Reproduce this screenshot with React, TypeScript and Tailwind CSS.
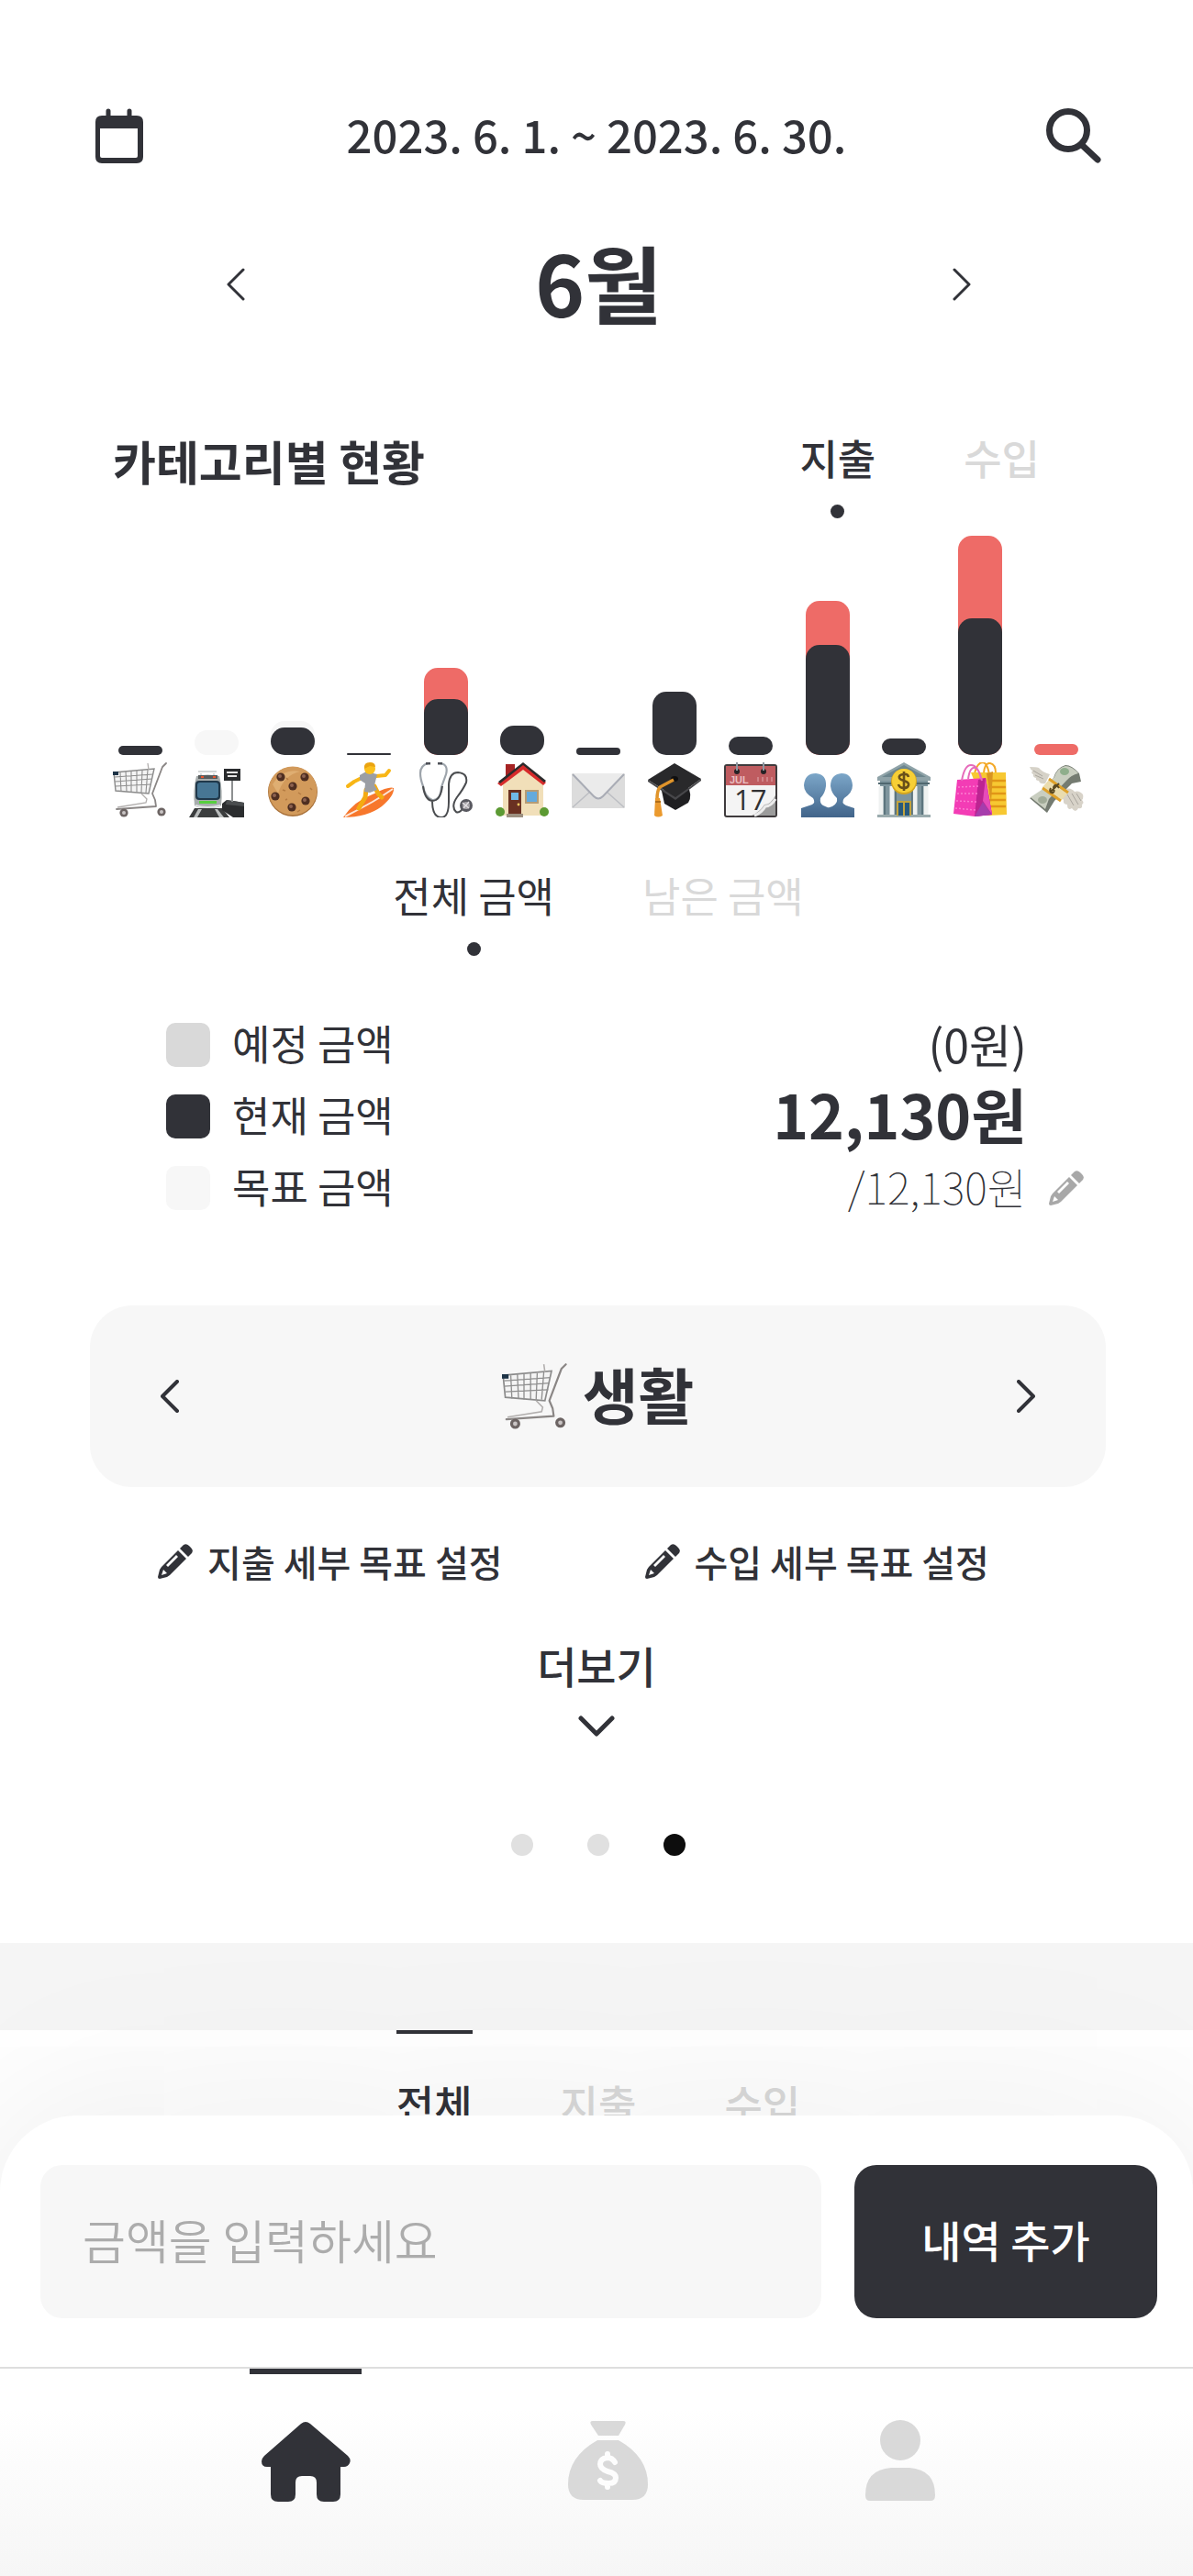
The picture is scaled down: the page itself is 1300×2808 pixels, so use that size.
import React from "react";

const INK = "#313238";

function Cart() {
  return (
    <svg viewBox="0 0 60 60" className="block h-full w-full" fill="none" aria-hidden="true">
      <path d="M1 11 45 7 39 34 3 31Z" fill="#f4f4f4" stroke="#8b8b8b" strokeWidth="1.4" />
      <path d="M2 16 44 13M2 21 43 18M3 26 42 24M8 11 9 32M14 10 15 32M20 10 20 33M26 9 26 33M32 9 31 33M38 8 36 33" stroke="#8f8f8f" strokeWidth="1.1" />
      <path d="M58 1 54 5 43 34 46 41 47 48 4 51" stroke="#8a8685" strokeWidth="1.8" strokeLinecap="round" strokeLinejoin="round" />
      <path d="M31 34 37 40 36 44 5 49M38 1 39 8" stroke="#b1aead" strokeWidth="1.3" />
      <rect x="0" y="10" width="6" height="4" fill="#1d3346" />
      <circle cx="12" cy="55" r="4.6" fill="#6c6463" />
      <circle cx="12" cy="55" r="2" fill="#c9c4c4" />
      <circle cx="53" cy="54" r="4.6" fill="#6c6463" />
      <circle cx="53" cy="54" r="2" fill="#c9c4c4" />
    </svg>
  );
}

function Station() {
  return (
    <svg viewBox="0 0 60 60" className="block h-full w-full" aria-hidden="true">
      <path d="M6 50H36L44 60H0Z" fill="#3b3d3e" />
      <path d="M10 51 5 60H9L14 51ZM28 51 33 60H38L31 51Z" fill="#b9bcbc" />
      <path d="M36 45 41 41 60 44V60H48L36 52Z" fill="#2b2d2f" />
      <path d="M41 41 60 44V48L40 46Z" fill="#4a4d4f" />
      <path d="M10 10H30M13 12V15M27 12V15" stroke="#c4c7c7" strokeWidth="1.4" />
      <path d="M8 15Q20 12 33 15Q37 30 35 47Q33 50 20 50Q8 50 6 47Q4 30 8 15Z" fill="#a7adad" />
      <path d="M10 14H31V18H10Z" fill="#565b5c" />
      <path d="M13 16H16M26 16H29" stroke="#e8542c" strokeWidth="2" />
      <rect x="7" y="20" width="27" height="21" rx="4" fill="#20384a" />
      <rect x="9" y="22" width="23" height="17" rx="3" fill="#477694" />
      <rect x="11" y="42" width="19" height="3" fill="#56cf3e" />
      <path d="M7 47Q20 51 34 47" stroke="#e2e5e5" strokeWidth="2" fill="none" />
      <rect x="46" y="19" width="2" height="24" fill="#8d9091" />
      <rect x="38" y="7" width="18" height="13" fill="#2a2c2e" />
      <path d="M41 11H53M42 15H52" stroke="#e6e6e6" strokeWidth="2" />
    </svg>
  );
}

function Cookie() {
  return (
    <svg viewBox="0 0 60 60" className="block h-full w-full" aria-hidden="true">
      <circle cx="30" cy="32" r="27" fill="#a8713a" />
      <circle cx="30" cy="31" r="26.4" fill="#d29a5b" />
      <path d="M8 24Q20 6 38 10Q20 14 14 34Z" fill="#dfae72" />
      {[
        [17, 16],
        [43, 16],
        [30, 26],
        [11, 37],
        [44, 42],
        [29, 49],
      ].map(([cx, cy]) => (
        <g key={`${cx}-${cy}`}>
          <circle cx={cx} cy={cy} r="4.6" fill="#4e2e21" />
          <circle cx={cx - 1} cy={cy - 1} r="2" fill="#8c6150" />
        </g>
      ))}
      <path d="M23 17 25 19M36 33 39 35M19 30 22 31M22 41 24 40M35 54 38 52M49 28 51 30" stroke="#b57c43" strokeWidth="1.5" />
    </svg>
  );
}

function Surfer() {
  return (
    <svg viewBox="0 0 60 60" className="block h-full w-full" fill="none" aria-hidden="true">
      <path d="M2 60Q14 42 36 34Q52 26 57 28Q58 36 44 48Q28 60 2 60Z" fill="#f7772c" />
      <path d="M4 59Q18 52 34 43Q46 36 56 29" stroke="#fbe7da" strokeWidth="2" />
      <path d="M22 17 14 21 7 26M38 15 48 14 52 9" stroke="#f8b616" strokeWidth="4" strokeLinecap="round" strokeLinejoin="round" />
      <path d="M27 30 26 38 19 50M36 26 40 34 44 38" stroke="#f4ab12" strokeWidth="5" strokeLinecap="round" strokeLinejoin="round" />
      <path d="M20 14 27 10 39 13 36 25 39 30 31 33 25 32 26 23 20 19Z" fill="#9b9ea4" />
      <circle cx="31" cy="7" r="6" fill="#fbc01d" />
      <path d="M25 7Q24 0 31 0Q37 0 37 5L31 4Z" fill="#eaa410" />
    </svg>
  );
}

function Stethoscope() {
  return (
    <svg viewBox="0 0 60 60" className="block h-full w-full" fill="none" aria-hidden="true">
      <path d="M11 1Q2 3 2 12Q2 18 5 26Q7 38 15 41Q24 42 25 27L30 13Q33 2 23 1" stroke="#9da4ab" strokeWidth="2.2" />
      <path d="M5 26Q7 41 15 42Q24 42 26 26M15 42Q15 60 25 60Q33 60 33 43V24Q34 11 43 11Q54 12 52 22Q49 29 42 38Q35 48 41 54Q45 56 49 49" stroke="#4a4c4f" strokeWidth="2" />
      <path d="M8 1H13M21 1H26" stroke="#4d5057" strokeWidth="3" />
      <circle cx="52" cy="47" r="7" fill="#595960" />
      <circle cx="52" cy="47" r="4" fill="#a5a2a6" />
      <path d="M48 44 55 50M49 50 55 43" stroke="#e3e0e4" strokeWidth="1.4" />
    </svg>
  );
}

function House() {
  return (
    <svg viewBox="0 0 60 60" className="block h-full w-full" aria-hidden="true">
      <path d="M12 2H22V14L12 24Z" fill="#a62323" />
      <path d="M9 24 31 5 53 24V58H9Z" fill="#f1dfb9" />
      <path d="M3 23 31 1 56 22 53 25 31 8 7 26Z" fill="#d72b2b" />
      <path d="M4 21 31 0 56 20 54 22 31 3 6 23Z" fill="#2c2b2c" />
      <rect x="15" y="30" width="14" height="28" fill="#6a3122" />
      <rect x="18" y="33" width="8" height="8" fill="#6fb9e7" />
      <circle cx="26" cy="46" r="1.4" fill="#f4cc61" />
      <rect x="33" y="30" width="15" height="15" fill="#b79c75" />
      <rect x="35" y="32" width="11" height="11" fill="#64aadd" />
      <rect x="13" y="56" width="18" height="4" fill="#9d9080" />
      <circle cx="6" cy="54" r="5" fill="#5c9a33" />
      <circle cx="54" cy="54" r="5" fill="#5c9a33" />
    </svg>
  );
}

function Mail() {
  return (
    <svg viewBox="0 0 60 60" className="block h-full w-full" fill="none" aria-hidden="true">
      <rect x="1" y="12" width="58" height="38" rx="1" fill="#dcdcdc" />
      <path d="M1 12H59L34 38Q30 42 26 38Z" fill="#ebebeb" />
      <path d="M2 49 21 32M58 49 39 32" stroke="#bcbec3" strokeWidth="1.5" />
      <path d="M2 13 25 37Q30 42 35 37L58 13" stroke="#a9acb5" strokeWidth="2" />
    </svg>
  );
}

function GradCap() {
  return (
    <svg viewBox="0 0 60 60" className="block h-full w-full" fill="none" aria-hidden="true">
      <path d="M16 31 44 25Q50 36 45 44L31 52 19 45Z" fill="#1f1f21" />
      <path d="M1 19 30 1 59 18 31 38Z" fill="#29292b" />
      <path d="M1 19 31 38 59 18V20L31 41 1 21Z" fill="#47474a" />
      <ellipse cx="30" cy="18" rx="4" ry="3" fill="#0f0f10" />
      <path d="M29 19 14 27Q11 31 11 40" stroke="#e0942a" strokeWidth="3.5" />
      <path d="M9 39H14L17 58Q12 61 8 58Z" fill="#eb9a2e" />
      <path d="M9 43H15" stroke="#b06d18" strokeWidth="2" />
    </svg>
  );
}

function DateSheet() {
  return (
    <svg viewBox="0 0 60 60" className="block h-full w-full overflow-visible" aria-hidden="true">
      <rect x="2" y="3" width="56" height="56" rx="2" fill="#f4f4f4" stroke="#3f3b3d" strokeWidth="2" />
      <path d="M3 4H57V25H3Z" fill="#bf5c60" />
      <path d="M38 16V21M43 16V21M48 16V21M53 16V21" stroke="#d08387" strokeWidth="2" />
      <path d="M57 36Q52 46 45 46Q40 54 31 58H57Z" fill="#9c9c9c" />
      <path d="M57 40Q52 48 46 48Q42 55 34 58" stroke="#ececec" strokeWidth="3" fill="none" />
      <text x="7" y="23" fontFamily="Liberation Sans" fontSize="11" fontWeight="700" fill="#eabfc1">JUL</text>
      <text x="12" y="52" fontFamily="Open Sans" fontSize="31" fill="#303032">17</text>
      <circle cx="15" cy="10" r="3" fill="#262225" />
      <circle cx="44" cy="10" r="3" fill="#262225" />
      <path d="M15 9V0M44 9V0" stroke="#8e97a1" strokeWidth="2" />
    </svg>
  );
}

function People() {
  return (
    <svg viewBox="0 0 60 60" className="block h-full w-full" aria-hidden="true">
      <defs>
        <linearGradient id="people" x1="0" y1="10" x2="0" y2="60" gradientUnits="userSpaceOnUse">
          <stop stopColor="#7ea9cb" />
          <stop offset="1" stopColor="#41648a" />
        </linearGradient>
      </defs>
      <path d="M1 60V50L13 46Q17 44 14 39Q4 33 4 25Q5 12 17 12Q29 13 28 26Q27 34 22 39Q21 45 25 47L34 51V60Z" fill="url(#people)" />
      <path d="M59 60V50L50 47Q44 44 48 39Q57 33 57 25Q56 12 45 12Q33 13 33 26Q34 34 40 39Q41 45 35 48L26 51V60Z" fill="url(#people)" />
    </svg>
  );
}

function Bank() {
  return (
    <svg viewBox="0 0 60 60" className="block h-full w-full" aria-hidden="true">
      <rect x="4" y="18" width="52" height="39" fill="#7e959d" />
      <path d="M1 16 30 0 59 16V20H1Z" fill="#8fa3a8" />
      <path d="M6 16 30 3 54 16Z" fill="#6c858d" />
      <path d="M2 23H58" stroke="#4f676f" strokeWidth="2" />
      <path d="M5 26V57M17 26V57M42 26V57M54 26V57" stroke="#eff2f1" strokeWidth="5" />
      <path d="M9 26V57M21 26V57M39 26V57M50 26V57" stroke="#526b74" strokeWidth="1.5" />
      <path d="M1 57H59V60H1Z" fill="#9aabad" />
      <rect x="22" y="42" width="16" height="16" fill="#c3a33c" />
      <path d="M24 44H29V58H24ZM31 44H36V58H31Z" fill="#28597d" />
      <circle cx="30" cy="21" r="14" fill="#d5a61e" />
      <circle cx="30" cy="20" r="13" fill="#f6cf36" />
      <path d="M35 16Q34 12 29 13Q24 14 25 17Q26 19 30 20Q36 22 35 25Q34 28 30 28Q25 28 24 24M30 10V31" fill="none" stroke="#695019" strokeWidth="2.6" />
    </svg>
  );
}

function Bags() {
  return (
    <svg viewBox="0 0 60 60" className="block h-full w-full" fill="none" aria-hidden="true">
      <path d="M24 12Q27 0 33 0Q38 1 40 13M34 12Q35 0 41 1Q47 2 47 12" stroke="#f3a928" strokeWidth="2" />
      <path d="M20 11H58L59 57 38 58Z" fill="#f7c832" />
      <path d="M39 20H58M39 27H58M40 34H58M40 41H58M40 48H58" stroke="#e19616" strokeWidth="2.5" />
      <path d="M37 12 44 10 42 44Z" fill="#d99420" />
      <path d="M5 19 36 17 43 57 24 59 1 56Z" fill="#f33cb5" />
      <path d="M36 17 28 19 24 59 43 57Z" fill="#bd2492" />
      <path d="M36 17 33 42 43 57Z" fill="#e74bb9" />
      <path d="M33 43 24 59 43 57Z" fill="#a63dac" />
      <path d="M6 27 28 26M5 34 27 34M4 42 26 43M3 50 25 52" stroke="#fb7cd0" strokeWidth="1.5" strokeDasharray="2 2" />
      <path d="M10 20Q13 3 20 3Q28 3 32 20M17 18Q19 4 25 6Q29 8 31 18" stroke="#e66bbb" strokeWidth="2" />
    </svg>
  );
}

function FlyingMoney() {
  return (
    <svg viewBox="0 0 60 60" className="block h-full w-full" fill="none" aria-hidden="true">
      <path d="M23 13Q15 11 11 6Q8 5 1 5Q2 8 4 9Q2 12 5 13Q4 16 8 17Q7 20 11 20Q12 24 18 23Z" fill="#d6d2c8" />
      <path d="M40 29Q46 27 50 32Q55 30 59 35Q60 39 58 41Q61 44 58 46Q59 51 54 50Q51 56 47 50Q42 53 42 46Q37 46 38 41Q35 38 36 33Z" fill="#d8d3c9" />
      <path d="M5 9 15 15M7 14 16 18M42 35 49 47M47 34 54 46M52 34 57 42" stroke="#aaa69e" strokeWidth="1" />
      <path d="M27 17Q30 6 40 3Q47 3 55 12L57 21 47 23Q36 34 28 42L20 55 1 39 13 33Z" fill="#747b71" />
      <path d="M28 16Q31 6 40 4Q47 4 54 12 46 14 41 20L22 40 18 51 2 38 14 30Z" fill="#c9cec0" />
      <ellipse cx="39" cy="10" rx="5" ry="4" fill="#8fae8c" />
      <ellipse cx="15" cy="41" rx="5" ry="4" fill="#a1ab98" />
      <path d="M22 19 42 34 36 41 15 27Z" fill="#eadcae" />
      <path d="M22 18 43 33M15 28 35 42" stroke="#dfa12a" strokeWidth="3" />
      <path d="M33 28Q29 22 27 27Q29 34 25 33Q22 32 24 28M23 33 33 23" stroke="#5c4a22" strokeWidth="2" />
    </svg>
  );
}

function Pencil({ className }: { className: string }) {
  return (
    <svg viewBox="0 0 38 38" className={className} fill="currentColor" aria-hidden="true">
      <path d="M24 5 28 1Q31-1 34 2L36 4Q39 7 37 10L33 14Z" />
      <path fillRule="evenodd" d="M22 7 31 16 13 34 10 36 2 38Q0 38 0 36L2 28 4 25ZM20 12 9 23 11 25 22 14ZM6 28 4 34 10 32Z" />
    </svg>
  );
}

function Chevron({ d, box, className, width }: { d: string; box: string; className: string; width: number }) {
  return (
    <svg viewBox={box} className={className} fill="none" stroke={INK} strokeWidth={width} strokeLinecap="round" strokeLinejoin="round" aria-hidden="true">
      <path d={d} />
    </svg>
  );
}

const LEFT = "M18 2 2 18 18 34";
const RIGHT = "M2 2 18 18 2 34";

type Category = { name: string; icon: () => React.ReactElement; goal?: number; over?: number; spent?: number };

const categories: Category[] = [
  { name: "생활", icon: Cart, spent: 10 },
  { name: "교통", icon: Station, goal: 27 },
  { name: "간식", icon: Cookie, goal: 37, spent: 30 },
  { name: "취미", icon: Surfer, spent: 2 },
  { name: "의료", icon: Stethoscope, over: 95, spent: 61 },
  { name: "주거", icon: House, spent: 32 },
  { name: "우편", icon: Mail, spent: 8 },
  { name: "교육", icon: GradCap, spent: 69 },
  { name: "일정", icon: DateSheet, spent: 20 },
  { name: "모임", icon: People, over: 168, spent: 120 },
  { name: "금융", icon: Bank, spent: 18 },
  { name: "쇼핑", icon: Bags, over: 239, spent: 149 },
  { name: "기타", icon: FlyingMoney, over: 12 },
];

function Bar({ height, color }: { height?: number; color: string }) {
  if (!height) return null;
  return <div className={`absolute inset-x-0 bottom-0 rounded-[15px] ${color}`} style={{ height }} />;
}

function DotTab({ label, active, className }: { label: string; active?: boolean; className: string }) {
  return (
    <button type="button" className={`flex flex-col items-center gap-[22px] text-[45px] leading-[58px] ${active ? "" : "text-[#d9d9d9]"} ${className}`}>
      {label}
      <span className={`size-[15px] rounded-full ${active ? "bg-[#313238]" : ""}`} />
    </button>
  );
}

function Amount({ swatch, label, children }: { swatch: string; label: string; children: React.ReactNode }) {
  return (
    <div className="flex h-[78px] items-center">
      <span className={`size-12 rounded-[10px] ${swatch}`} />
      <dt className="ml-6 pb-1 text-[45px]">{label}</dt>
      <dd className="ml-auto flex items-center">{children}</dd>
    </div>
  );
}

export default function App() {
  return (
    <div className="min-h-screen bg-white pb-[479px] text-[#313238] [font-family:'Noto_Sans_CJK_KR',sans-serif]">
      <header className="pt-[104px]">
        <div className="flex h-[88px] items-center justify-between px-[100px]">
          <button type="button" aria-label="달력">
            <svg viewBox="0 0 60 60" className="block size-[60px]" aria-hidden="true">
              <path fillRule="evenodd" fill={INK} d="M10 8H49Q56 8 56 15V53Q56 60 49 60H11Q4 60 4 53V15Q4 8 11 8ZM9 22V52Q9 54 11 54H48Q50 54 50 52V22Z" />
              <path d="M18 3V10M41 3V10" stroke={INK} strokeWidth="5" strokeLinecap="round" />
            </svg>
          </button>
          <p className="pb-1 text-[49px] font-medium">2023. 6. 1. ~ 2023. 6. 30.</p>
          <button type="button" aria-label="검색">
            <svg viewBox="0 0 60 60" className="block size-[60px]" fill="none" stroke={INK} strokeLinecap="round" aria-hidden="true">
              <circle cx="24" cy="24" r="20.5" strokeWidth="7" />
              <path d="M40 41 56 56" strokeWidth="7" />
            </svg>
          </button>
        </div>
        <div className="mt-[58px] flex h-[120px] items-center justify-between pr-[242px] pl-[247px]">
          <button type="button" aria-label="이전 달">
            <Chevron d={LEFT} box="0 0 20 36" className="block h-9 w-5" width={3} />
          </button>
          <h1 className="pb-2 text-[92px] leading-[112px] font-bold">6월</h1>
          <button type="button" aria-label="다음 달">
            <Chevron d={RIGHT} box="0 0 20 36" className="block h-9 w-5" width={3} />
          </button>
        </div>
      </header>

      <main>
        <section className="mt-[100px] pr-[107px] pl-[111px]">
          <div className="flex items-start">
            <h2 className="ml-3 text-[51px] leading-[64px] font-bold">카테고리별 현황</h2>
            <div className="mr-[60px] ml-auto flex gap-24">
              <DotTab label="지출" active className="font-medium" />
              <DotTab label="수입" className="font-medium" />
            </div>
          </div>
          <ul className="mt-[19px] grid grid-cols-[repeat(13,minmax(0,1fr))]">
            {categories.map(({ name, icon: Icon, goal, over, spent }) => (
              <li key={name} className="flex flex-col items-center gap-2" title={name}>
                <div className="relative h-[239px] w-12">
                  <Bar height={goal} color="bg-[#f7f7f7]" />
                  <Bar height={over} color="bg-[#ee6b67]" />
                  <Bar height={spent} color="bg-[#313238]" />
                </div>
                <div className="size-[60px]">
                  <Icon />
                </div>
              </li>
            ))}
          </ul>
          <div className="mt-14 flex justify-center gap-24">
            <DotTab label="전체 금액" active className="" />
            <DotTab label="남은 금액" className="" />
          </div>
        </section>

        <dl className="mx-[181px] mt-[58px]">
          <Amount swatch="bg-[#d9d9d9]" label="예정 금액">
            <span className="pb-1 text-[50px]">(0원)</span>
          </Amount>
          <Amount swatch="bg-[#313238]" label="현재 금액">
            <span className="pb-2 text-[66px] leading-[70px] font-bold">12,130원</span>
          </Amount>
          <Amount swatch="bg-[#f7f7f7]" label="목표 금액">
            <span className="pb-1 text-[47px] font-thin">/12,130원</span>
            <button type="button" aria-label="목표 금액 수정" className="-mr-[62px] ml-6 text-[#a8a8a8]">
              <Pencil className="block size-[38px]" />
            </button>
          </Amount>
        </dl>

        <div className="mt-[89px] mr-[95px] ml-[98px] flex h-[198px] items-center justify-between rounded-[46px] bg-[#f7f7f7] px-[77px]">
          <button type="button" aria-label="이전 카테고리">
            <Chevron d={LEFT} box="0 0 20 36" className="block h-9 w-5" width={4} />
          </button>
          <div className="flex items-center gap-4">
            <div className="size-[72px]">
              <Cart />
            </div>
            <h2 className="pb-2 text-[66px] leading-[90px] font-bold">생활</h2>
          </div>
          <button type="button" aria-label="다음 카테고리">
            <Chevron d={RIGHT} box="0 0 20 36" className="block h-9 w-5" width={4} />
          </button>
        </div>

        <div className="mt-[51px] flex justify-center gap-[155px] pr-[50px]">
          {["지출 세부 목표 설정", "수입 세부 목표 설정"].map((label) => (
            <button key={label} type="button" className="flex items-center gap-4 text-[40px] leading-[60px] font-medium">
              <Pencil className="size-[38px]" />
              {label}
            </button>
          ))}
        </div>

        <button type="button" className="mx-auto mt-[52px] flex flex-col items-center gap-6 text-[47px] leading-[62px] font-medium">
          더보기
          <Chevron d="M3 3 20 20 37 3" box="0 0 40 24" className="block h-6 w-10" width={5} />
        </button>

        <div className="mt-[105px] flex justify-center gap-[59px] pl-[3px]">
          <button type="button" aria-label="1페이지" className="size-6 rounded-full bg-[#e0e0e0]" />
          <button type="button" aria-label="2페이지" className="size-6 rounded-full bg-[#e0e0e0]" />
          <button type="button" aria-label="3페이지" className="size-6 rounded-full bg-[#0d0d0d]" />
        </div>

        <div className="mt-[95px] h-[95px] bg-[#f5f5f5]" />

        <div className="flex justify-center gap-24 pl-1 text-[45px] leading-[64px] font-medium">
          <button type="button" className="border-t-4 border-[#313238] pt-11">전체</button>
          <button type="button" className="border-t-4 border-transparent pt-11 text-[#d9d9d9]">지출</button>
          <button type="button" className="border-t-4 border-transparent pt-11 text-[#d9d9d9]">수입</button>
        </div>
      </main>

      <div className="fixed inset-x-0 bottom-0 rounded-t-[84px] bg-white shadow-[0_0_220px_rgba(0,0,0,0.09)]">
        <form className="flex h-[274px] items-center gap-9 px-11 pr-[39px]">
          <input
            type="text"
            aria-label="금액"
            placeholder="금액을 입력하세요"
            className="h-[167px] min-w-0 flex-1 rounded-3xl bg-[#f7f7f7] px-[46px] pb-1 text-[51px] font-[350] outline-none placeholder:text-[#acacac]"
          />
          <button type="button" className="h-[167px] w-[330px] rounded-3xl bg-[#313238] pb-1 text-[47px] font-medium text-white">내역 추가</button>
        </form>
        <nav className="flex h-[228px] justify-between border-t-2 border-[#dedede] bg-linear-to-b from-white from-20% to-[#f6f6f6] pr-[269px] pl-[272px]">
          <a href="#home" aria-label="홈" aria-current="page" className="w-[122px] border-t-[6px] border-[#313238] pt-[51px]">
            <svg viewBox="0 0 98 88" className="mx-auto block h-[88px] w-[98px]" fill={INK} aria-hidden="true">
              <path d="M44 3Q49-1 54 3L95 38Q99 42 97 46Q95 50 91 50H87V80Q87 88 79 88H69Q61 88 61 80V67Q61 60 54 60H45Q38 60 38 67V80Q38 88 30 88H19Q11 88 11 80V50H7Q1 50 1 44Q1 41 4 38Z" />
            </svg>
          </a>
          <a href="#assets" aria-label="자산" className="w-[122px] border-t-[6px] border-transparent pt-[50px]">
            <svg viewBox="0 0 87 88" className="mx-auto block h-[88px] w-[87px]" fill="#d9d9d9" aria-hidden="true">
              <path d="M27 1H60Q64 1 62 5L55 17H33L25 5Q23 1 27 1Z" />
              <path d="M32 22H55Q87 40 87 70Q87 87 70 87H17Q0 87 0 70Q0 40 32 22Z" />
              <path d="M51 46Q48 41 43 41Q35 42 35 48Q35 53 43 56Q52 58 52 63Q52 69 44 69Q37 69 35 66M43 37V41M43 69V73" fill="none" stroke="#fdfdfd" strokeWidth="6" strokeLinecap="round" />
            </svg>
          </a>
          <a href="#profile" aria-label="내 정보" className="w-[100px] border-t-[6px] border-transparent pt-[50px]">
            <svg viewBox="0 0 76 88" className="mx-auto block h-[88px] w-[76px]" fill="#d9d9d9" aria-hidden="true">
              <circle cx="38" cy="22" r="22" />
              <path d="M28 52H48Q76 54 76 82Q76 88 71 88H5Q0 88 0 82Q0 54 28 52Z" />
            </svg>
          </a>
        </nav>
      </div>
    </div>
  );
}
